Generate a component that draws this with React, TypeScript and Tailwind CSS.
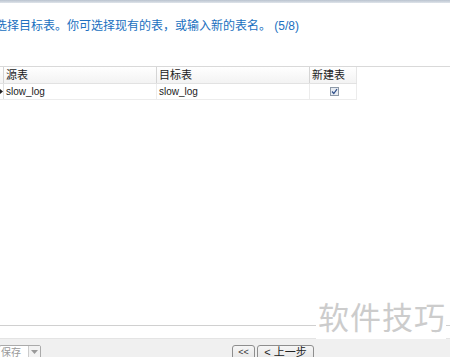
export default function App() {
  const cjk = '"Liberation Sans", "Noto Sans CJK SC", sans-serif';

  return (
    <div
      className="relative w-[450px] h-[357px] overflow-hidden bg-white flex flex-col"
      style={{ fontFamily: cjk }}
    >
      {/* window top edge */}
      <div className="h-[3px] bg-gradient-to-b from-[#b9c3cf] to-[#dfe4ea] shrink-0" />

      {/* wizard header */}
      <div className="h-[64px] shrink-0 border-b border-[#d9d9d9] pt-[15px]">
        <p className="ml-[-5px] text-[12px] leading-[16px] text-[#2070c0] whitespace-nowrap">
          选择目标表。你可选择现有的表，或输入新的表名。 (5/8)
        </p>
      </div>

      {/* mapping table */}
      <div className="w-[357px] text-[11px] text-[#222] shrink-0">
        <div className="flex h-[17px] bg-gradient-to-b from-white to-[#f3f3f3] border-b border-[#e2e2e2] leading-[17px]">
          <div className="w-[4px] border-r border-[#d5d5d5]" />
          <div className="w-[153px] pl-[2px] border-r border-[#d5d5d5]">源表</div>
          <div className="w-[153px] pl-[2px] border-r border-[#d5d5d5]">目标表</div>
          <div className="flex-1 pl-[2px] border-r border-[#e6e6e6]">新建表</div>
        </div>
        <div className="flex h-[16px] border-b border-[#ececec] leading-[16px]">
          <div className="w-[4px] border-r border-[#e0e0e0] flex items-center">
            <svg width="3" height="5" viewBox="0 0 3 5">
              <path d="M0 0 L3 2.5 L0 5 Z" fill="#222" />
            </svg>
          </div>
          <div className="w-[153px] pl-[2px] border-r border-[#ececec] text-[10px]">slow_log</div>
          <div className="w-[153px] pl-[2px] border-r border-[#ececec] text-[10px]">slow_log</div>
          <div className="flex-1 border-r border-[#ececec] flex items-center pl-[20px]">
            <svg width="9" height="9" viewBox="0 0 9 9">
              <rect x="0.5" y="0.5" width="8" height="8" fill="#e8ecf2" stroke="#8e9aa8" />
              <path d="M2 4.5 L3.8 6.5 L7 2.2" fill="none" stroke="#2f4f8a" strokeWidth="1.2" />
            </svg>
          </div>
        </div>
      </div>

      <div className="flex-1" />

      {/* footer separator */}
      <div className="h-[13px] border-t border-[#d0d0d0] shrink-0" />

      {/* button strip */}
      <div className="h-[19px] bg-[#f0f0f0] border-t border-[#e4e4e4] shrink-0 flex items-start pt-[6px]">
        <div className="flex h-[22px] w-[42px] ml-[-1px] border border-[#aaa] bg-white rounded-[2px] text-[10px] text-[#999]">
          <div className="flex-1 leading-[14px] pl-[1px] overflow-hidden whitespace-nowrap">保存</div>
          <div className="w-[12px] border-l border-[#ccc] bg-[#f2f2f2] flex justify-center pt-[4px]">
            <svg width="7" height="4" viewBox="0 0 7 4">
              <path d="M0 0 L7 0 L3.5 4 Z" fill="#9a9a9a" />
            </svg>
          </div>
        </div>
        <div className="flex gap-[2px] ml-[191px]">
          <button className="h-[22px] w-[23px] border border-[#8e8e8e] rounded-[3px] bg-gradient-to-b from-[#f6f6f6] to-[#dddddd] text-[9px] leading-[12px] text-[#333] flex justify-center">
            &lt;&lt;
          </button>
          <button className="h-[22px] w-[57px] border border-[#8e8e8e] rounded-[3px] bg-gradient-to-b from-[#f6f6f6] to-[#dddddd] text-[11px] leading-[12px] text-[#222] flex justify-center">
            &lt; 上一步
          </button>
        </div>
      </div>

      {/* watermark */}
      <div className="absolute left-[316px] top-[299px] bg-white pl-[2px] text-[31px] leading-[40px] text-[#cccccc] whitespace-nowrap tracking-[1px]">
        软件技巧
      </div>
    </div>
  );
}
